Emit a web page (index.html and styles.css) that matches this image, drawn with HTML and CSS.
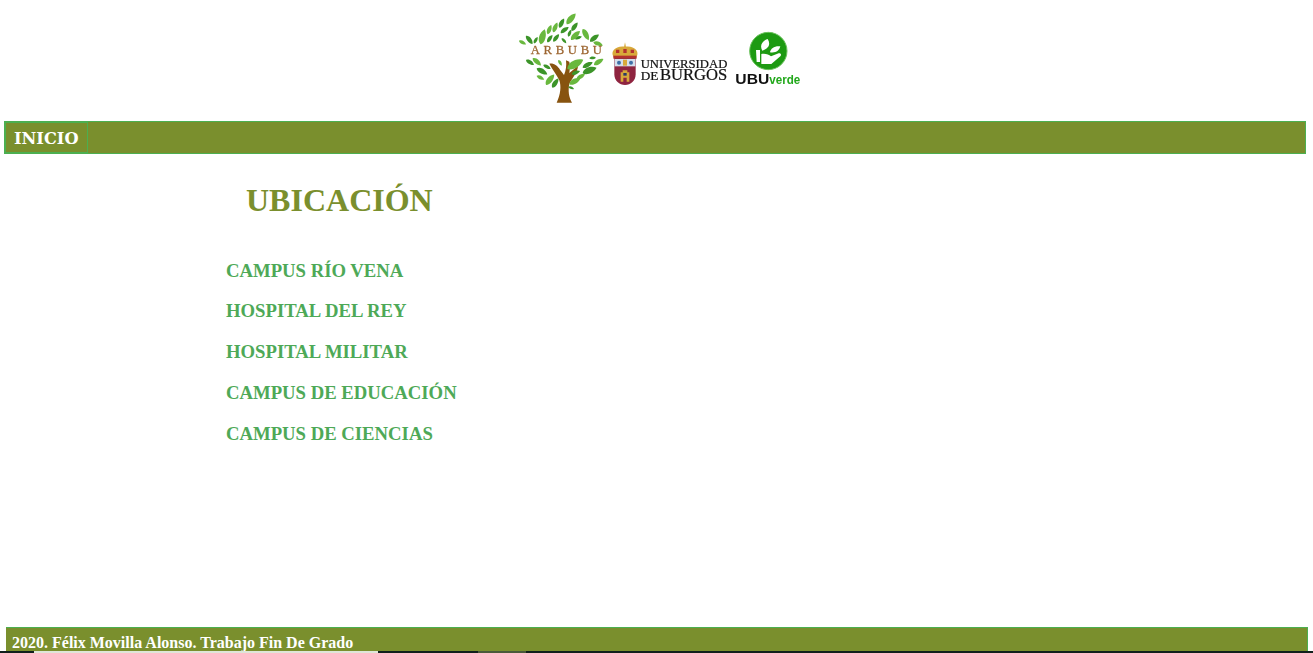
FILE: index.html
```html
<!DOCTYPE html>
<html lang="es">
<head>
<meta charset="utf-8">
<title>Arbubu</title>
<link rel="stylesheet" href="styles.css">
</head>
<body>
<div class="page">
  <header class="logos">
    <svg class="logo" viewBox="0 0 900 315" width="300" height="105" aria-label="Arbubu, Universidad de Burgos, UBUverde">
      <defs>
        <path id="leaf" d="M0 0C7-12 28-12 40 0C28 10 7 10 0 0Z"/>
      </defs>
      <path class="trunk" d="M140 293C152 268 154 244 148 226C140 208 128 196 118 176C132 174 142 182 150 194L162 210C168 196 170 182 168 166L178 170C180 180 180 192 178 204L204 182C204 200 186 220 178 236C174 256 176 276 186 293Z"/>
      <g class="dark">
        <use href="#leaf" transform="translate(148 68) rotate(-63) scale(.78)"/>
        <use href="#leaf" transform="translate(185 78) rotate(-55) scale(.78)"/>
        <use href="#leaf" transform="translate(152 84) rotate(-37) scale(.75)"/>
        <use href="#leaf" transform="translate(112 112) rotate(-55) scale(.67)"/>
        <use href="#leaf" transform="translate(130 110) rotate(-52) scale(.7)"/>
        <use href="#leaf" transform="translate(155 100) rotate(47) scale(.5)"/>
        <use href="#leaf" transform="translate(175 95) rotate(-68) scale(.55)"/>
        <use href="#leaf" transform="translate(195 102) rotate(-20) scale(.55)"/>
        <use href="#leaf" transform="translate(240 110) rotate(-39) scale(.86)"/>
        <use href="#leaf" transform="translate(48 92) rotate(52) scale(.8)"/>
        <use href="#leaf" transform="translate(72 115) rotate(-60) scale(.55)"/>
        <use href="#leaf" transform="translate(48 165) rotate(32) scale(.7)"/>
        <use href="#leaf" transform="translate(100 180) rotate(28) scale(.62)"/>
        <use href="#leaf" transform="translate(80 190) rotate(30) scale(.92)"/>
        <use href="#leaf" transform="translate(127 248) rotate(-57) scale(.83)"/>
        <use href="#leaf" transform="translate(218 188) rotate(-28) scale(.85)"/>
        <use href="#leaf" transform="translate(238 160) rotate(-6) scale(.5)"/>
        <use href="#leaf" transform="translate(218 205) rotate(-22) scale(1.12)"/>
        <use href="#leaf" transform="translate(185 208) rotate(-22) scale(.68)"/>
        <use href="#leaf" transform="translate(175 245) rotate(22) scale(.46)"/>
      </g>
      <g class="light">
        <use href="#leaf" transform="translate(170 58) rotate(-50) scale(1.05)"/>
        <use href="#leaf" transform="translate(130 82) rotate(-68) scale(.8)"/>
        <use href="#leaf" transform="translate(113 88) rotate(-69) scale(.75)"/>
        <use href="#leaf" transform="translate(92 118) rotate(-75) scale(1.18)"/>
        <use href="#leaf" transform="translate(183 105) rotate(-45) scale(.95)"/>
        <use href="#leaf" transform="translate(218 72) rotate(62) scale(.95)"/>
        <use href="#leaf" transform="translate(250 112) rotate(18) scale(.75)"/>
        <use href="#leaf" transform="translate(27 107) rotate(28) scale(.6)"/>
        <use href="#leaf" transform="translate(68 160) rotate(41) scale(.83)"/>
        <use href="#leaf" transform="translate(80 212) rotate(28) scale(.64)"/>
        <use href="#leaf" transform="translate(108 240) rotate(-52) scale(1)"/>
        <use href="#leaf" transform="translate(145 165) rotate(60) scale(.5)"/>
        <use href="#leaf" transform="translate(172 192) rotate(-30) scale(1.38)"/>
        <use href="#leaf" transform="translate(252 180) rotate(-33) scale(.84)"/>
        <use href="#leaf" transform="translate(200 222) rotate(-30) scale(.72)"/>
        <use href="#leaf" transform="translate(178 238) rotate(-28) scale(.96)"/>
      </g>
      <text class="arbubu" x="62" y="148" textLength="214" lengthAdjust="spacing">ARBUBU</text>

      <path class="gold" d="M345 112l3 14h-6zM308 150C304 134 322 124 345 124C368 124 386 134 382 150L376 162H314Z"/>
      <path class="crown" d="M318 134h10v10h-10zM340 132h10v12h-10zM362 134h10v10h-10z"/>
      <path class="crown" d="M310 152H380V161H310Z"/>
      <path class="maroon" d="M313 160H377V208C377 228 362 240 345 240C328 240 313 228 313 208Z"/>
      <rect class="pale" x="314" y="162" width="62" height="22"/>
      <circle class="blue" cx="327" cy="173" r="6"/>
      <circle class="blue" cx="363" cy="173" r="6"/>
      <rect class="gold" x="339" y="164" width="12" height="18"/>
      <path class="gold" d="M332 230V202H338V196H352V202H358V230H350V218H340V230Z"/>
      <path class="navy" d="M340 204h10v8h-10z"/>
      <text class="uni" x="392" y="190" textLength="260" lengthAdjust="spacingAndGlyphs">UNIVERSIDAD</text>
      <text class="de" x="392" y="226" textLength="53" lengthAdjust="spacingAndGlyphs">DE</text>
      <text class="burgos" x="450" y="226" textLength="202" lengthAdjust="spacingAndGlyphs">BURGOS</text>

      <circle class="ubu" cx="775" cy="138" r="56"/>
      <path class="white" d="M738 135H750V171H740ZM754 147C768 145 776 149 783 154L806 145C813 144 815 150 811 154L784 177H754Z"/>
      <path class="white" d="M757 137C748 122 756 108 773 102C782 116 778 130 757 137ZM780 142C782 130 794 122 811 124C808 136 798 145 780 142Z"/>
      <text class="ubutext" x="676" y="237" textLength="102" lengthAdjust="spacingAndGlyphs">UBU</text>
      <text class="verde" x="778" y="237" textLength="93" lengthAdjust="spacingAndGlyphs">verde</text>
    </svg>
  </header>

  <nav class="menu">
    <a class="menu-item" href="#">INICIO</a>
  </nav>

  <main class="content">
    <h1 class="title">UBICACIÓN</h1>
    <ul class="places">
      <li class="place">CAMPUS RÍO VENA</li>
      <li class="place">HOSPITAL DEL REY</li>
      <li class="place">HOSPITAL MILITAR</li>
      <li class="place">CAMPUS DE EDUCACIÓN</li>
      <li class="place">CAMPUS DE CIENCIAS</li>
    </ul>
  </main>

  <footer class="footer">2020. Félix Movilla Alonso. Trabajo Fin De Grado</footer>
  <div class="strip">
    <span class="seg seg-a"></span>
    <span class="seg seg-b"></span>
    <span class="seg seg-c"></span>
    <span class="seg seg-d"></span>
    <span class="seg seg-e"></span>
  </div>
</div>
</body>
</html>
```
FILE: styles.css
```css
html, body {
  margin: 0;
  height: 100%;
  overflow: hidden;
  background: #fff;
}

.page {
  height: 653px;
  display: flex;
  flex-direction: column;
  font-family: "Liberation Serif", "Times New Roman", serif;
}

.logos {
  height: 121px;
  box-sizing: border-box;
  padding: 5px 0 0 7px;
  display: flex;
  justify-content: center;
  align-items: flex-start;
}

.logo {
  display: block;
  filter: blur(.35px);
}

.trunk { fill: #87530f; }
.dark { fill: #3c9429; }
.light { fill: #69b83e; }
.arbubu { font: 38px "Liberation Serif", serif; fill: #9c6530; stroke: #9c6530; stroke-width: .8; }
.gold { fill: #d8a93a; }
.crown { fill: #b3322f; }
.maroon { fill: #8f2440; }
.pale { fill: #d5dfec; }
.blue { fill: #3f6fa8; }
.white { fill: #fff; }
.navy { fill: #2c3a66; }
.uni { font: 40px "Liberation Serif", serif; fill: #111; stroke: #111; stroke-width: .7; }
.de { font: 38px "Liberation Serif", serif; fill: #111; stroke: #111; stroke-width: .7; }
.burgos { font: 50px "Liberation Serif", serif; fill: #111; stroke: #111; stroke-width: .7; }
.ubu { fill: #1d9a12; stroke: #6cc25e; stroke-width: 3; }
.ubutext { font: bold 42px "Liberation Sans", sans-serif; fill: #111; }
.verde { font: bold 36px "Liberation Sans", sans-serif; fill: #22a81b; }

.menu {
  height: 33px;
  box-sizing: border-box;
  margin: 0 7px 0 4px;
  display: flex;
  background: #7a8f2d;
  border: 1px solid #4caf50;
}

.menu-item {
  width: 83px;
  box-sizing: border-box;
  padding: 6px 0 0 8px;
  border: 1px solid #4caf50;
  color: #fff;
  font: bold 16.2px "DejaVu Serif", serif;
  text-decoration: none;
}

.content {
  flex: 1;
  padding-left: 226px;
}

.title {
  margin: 28px 0 0 20px;
  color: #7a8f2d;
  font-size: 32px;
  line-height: 37px;
  font-weight: bold;
}

.places {
  list-style: none;
  margin: 31.6px 0 0;
  padding: 0;
}

.place {
  height: 40.8px;
  line-height: 40.8px;
  color: #4ea957;
  font-size: 18.72px;
  font-weight: bold;
}

.footer {
  height: 24px;
  box-sizing: border-box;
  margin-left: 6px;
  width: 1302px;
  padding: 6px 0 0 6px;
  background: #7a8f2d;
  border: 1px solid #4caf50;
  border-width: 1px 1px 0 0;
  color: #fff;
  font-size: 16px;
  font-weight: bold;
  line-height: 18px;
}

.strip {
  height: 2px;
  display: flex;
}

.seg { display: block; }
.seg-a { width: 34px; background: #10201c; }
.seg-b { width: 344px; background: #dfe6d8; }
.seg-c { width: 100px; background: #10201c; }
.seg-d { width: 48px; background: #4a5a3a; }
.seg-e { flex: 1; background: #10201c; }
```
